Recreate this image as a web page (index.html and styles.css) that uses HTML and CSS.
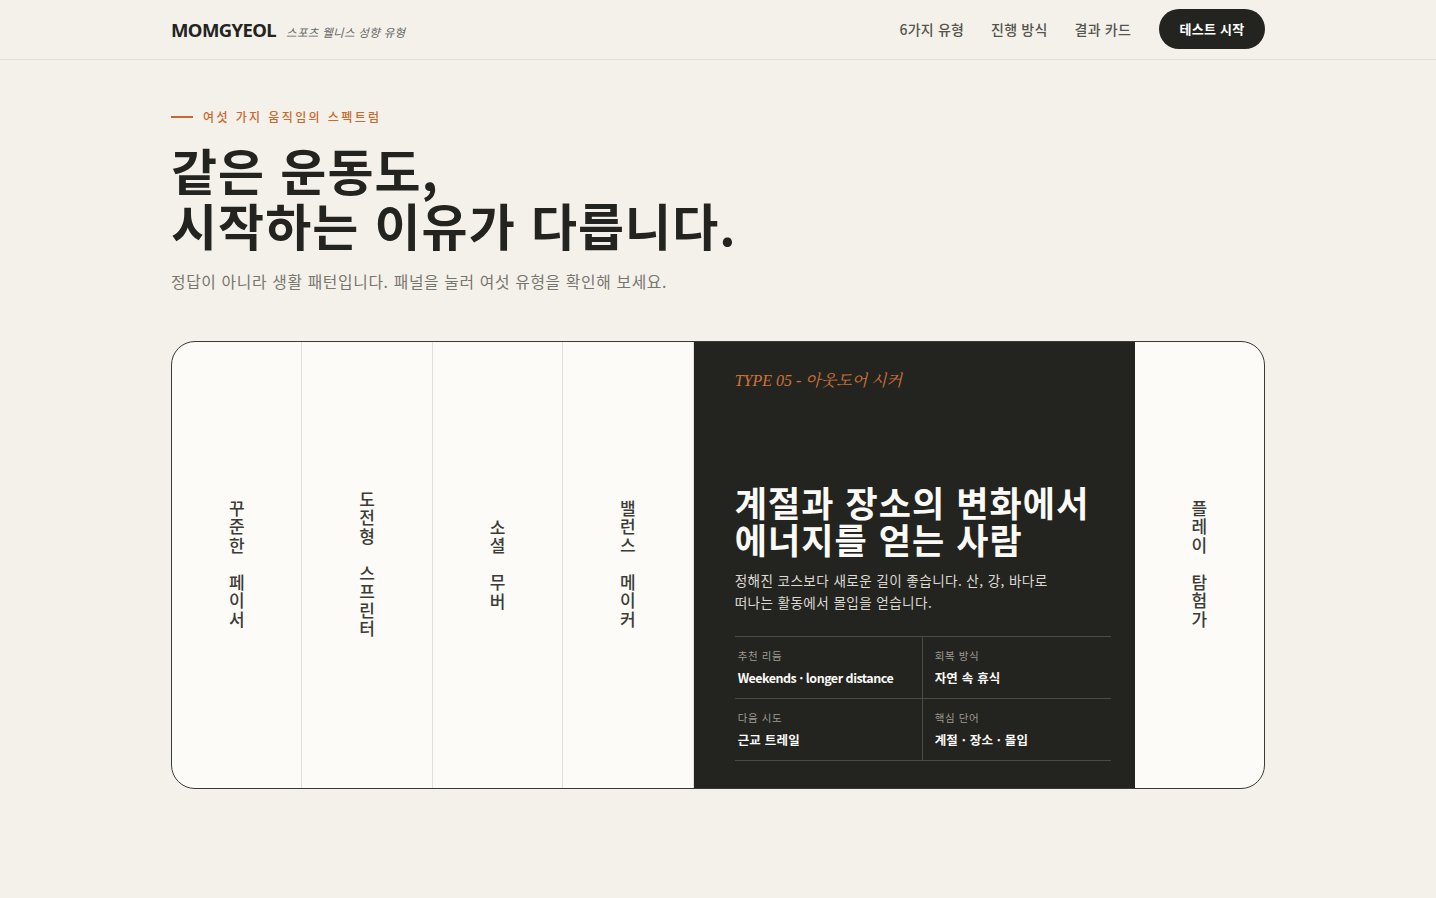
FILE: index.html
```html
<!DOCTYPE html>
<html lang="ko">
<head>
<meta charset="utf-8">
<title>MOMGYEOL</title>
<link rel="stylesheet" href="styles.css">
</head>
<body>
<header class="site-header">
  <div class="wrap header-inner">
    <div class="brand">
      <span class="logo">MOMGYEOL</span>
      <span class="tagline">스포츠 웰니스 성향 유형</span>
    </div>
    <nav class="nav">
      <a class="nav-link">6가지 유형</a>
      <a class="nav-link">진행 방식</a>
      <a class="nav-link">결과 카드</a>
      <a class="nav-btn">테스트 시작</a>
    </nav>
  </div>
</header>
<main class="wrap main">
  <p class="eyebrow"><span class="eyebrow-line"></span>여섯 가지 움직임의 스펙트럼</p>
  <h1 class="hero-title">같은 운동도,<br>시작하는 이유가 다릅니다.</h1>
  <p class="hero-sub">정답이 아니라 생활 패턴입니다. 패널을 눌러 여섯 유형을 확인해 보세요.</p>

  <section class="panels">
    <div class="panel"><span class="vtext">꾸준한 페이서</span></div>
    <div class="panel"><span class="vtext">도전형 스프린터</span></div>
    <div class="panel"><span class="vtext">소셜 무버</span></div>
    <div class="panel"><span class="vtext">밸런스 메이커</span></div>
    <div class="panel panel-active">
      <p class="type-label">TYPE 05 - 아웃도어 시커</p>
      <div class="active-body">
        <h2 class="active-title">계절과 장소의 변화에서<br>에너지를 얻는 사람</h2>
        <p class="active-desc">정해진 코스보다 새로운 길이 좋습니다. 산, 강, 바다로<br>떠나는 활동에서 몰입을 얻습니다.</p>
        <div class="facts">
          <div class="fact"><span class="fact-label">추천 리듬</span><span class="fact-value">Weekends · longer distance</span></div>
          <div class="fact"><span class="fact-label">회복 방식</span><span class="fact-value">자연 속 휴식</span></div>
          <div class="fact"><span class="fact-label">다음 시도</span><span class="fact-value">근교 트레일</span></div>
          <div class="fact"><span class="fact-label">핵심 단어</span><span class="fact-value">계절 · 장소 · 몰입</span></div>
        </div>
      </div>
    </div>
    <div class="panel"><span class="vtext">플레이 탐험가</span></div>
  </section>
</main>
</body>
</html>
```
FILE: styles.css
```css
* { box-sizing: border-box; }
html, body { margin: 0; padding: 0; }
body {
  background: #f4f1ea;
  color: #23241f;
  font-family: "Noto Sans CJK KR", "Noto Sans", sans-serif;
  width: 1436px;
  height: 898px;
  overflow: hidden;
}
.wrap { width: 1094px; margin: 0 auto; }

.site-header { border-bottom: 1px solid #e3dfd6; }
.header-inner {
  height: 59px;
  display: flex;
  align-items: center;
  justify-content: space-between;
}
.brand { display: flex; align-items: baseline; gap: 10px; }
.logo {
  font-family: "Noto Sans", sans-serif;
  font-weight: 700;
  font-size: 18.5px;
  letter-spacing: -0.6px;
  color: #23241f;
}
.tagline {
  font-size: 11.5px;
  font-style: italic;
  color: #666;
  letter-spacing: 0.3px;
}
.nav { display: flex; align-items: center; gap: 27px; margin-top: -2px; }
.nav-link {
  font-size: 14px;
  font-weight: 500;
  color: #55554f;
  letter-spacing: 0.2px;
}
.nav-link:nth-child(3) { margin-right: 1px; }
.nav-btn {
  display: inline-flex;
  align-items: center;
  justify-content: center;
  height: 40px;
  width: 106px;
  border-radius: 20px;
  background: #23241f;
  color: #fff;
  font-size: 13px;
  font-weight: 700;
  letter-spacing: 0.3px;
}

.main { padding-top: 48px; }
.eyebrow {
  margin: 0;
  display: flex;
  align-items: center;
  gap: 10px;
  font-size: 12px;
  font-weight: 500;
  color: #c8692f;
  letter-spacing: 2.4px;
}
.eyebrow-line { width: 22px; height: 2px; background: #c8692f; }
.hero-title {
  margin: 17px 0 0;
  font-size: 50px;
  line-height: 55px;
  font-weight: 700;
  letter-spacing: 1.1px;
  color: #23241f;
}
.hero-sub {
  margin: 18px 0 0;
  font-size: 15.8px;
  color: #77766f;
  letter-spacing: 0.65px;
}

.panels {
  margin-top: 48px;
  height: 448px;
  display: flex;
  border: 1px solid #3a3a36;
  border-radius: 24px;
  overflow: hidden;
  background: #fcfbf7;
}
.panel {
  flex: 1 1 0;
  min-width: 0;
  display: flex;
  align-items: center;
  justify-content: center;
  border-right: 1px solid #e2e0da;
}
.panel:last-child { border-right: 0; }
.vtext {
  writing-mode: vertical-rl;
  text-orientation: upright;
  font-size: 17px;
  font-weight: 500;
  color: #3c3c37;
  letter-spacing: 1.5px;
}
.panel-active {
  flex: 0 0 441px;
  background: #23241f;
  border-right: 0;
  flex-direction: column;
  align-items: stretch;
  justify-content: space-between;
  padding: 26px 24px 27px 41px;
}
.type-label {
  margin: 0;
  font-family: "Liberation Serif", "Noto Serif CJK KR", serif;
  font-style: italic;
  font-size: 16px;
  color: #d0733a;
}
.active-title {
  margin: 0;
  font-size: 35px;
  line-height: 37px;
  font-weight: 700;
  letter-spacing: 1.1px;
  color: #fbfaf6;
}
.active-desc {
  margin: 12px 0 0;
  font-size: 13.6px;
  line-height: 22px;
  color: #dcdad3;
  letter-spacing: 0.4px;
}
.facts {
  margin-top: 23px;
  display: grid;
  grid-template-columns: 1fr 1fr;
  border-top: 1px solid #4a4b45;
}
.fact {
  height: 62px;
  display: flex;
  flex-direction: column;
  justify-content: center;
  gap: 5px;
  padding: 0 3px;
  border-bottom: 1px solid #4a4b45;
}
.fact:nth-child(odd) { border-right: 1px solid #4a4b45; }
.fact:nth-child(even) { padding-left: 12px; }
.fact-label { font-size: 10.5px; color: #9b9a93; letter-spacing: 0.6px; }
.fact-value { font-size: 12.5px; font-weight: 700; color: #fbfaf6; letter-spacing: -0.5px; }
.fact:nth-child(even) .fact-value, .fact:nth-child(3) .fact-value { letter-spacing: 0.2px; }
```
